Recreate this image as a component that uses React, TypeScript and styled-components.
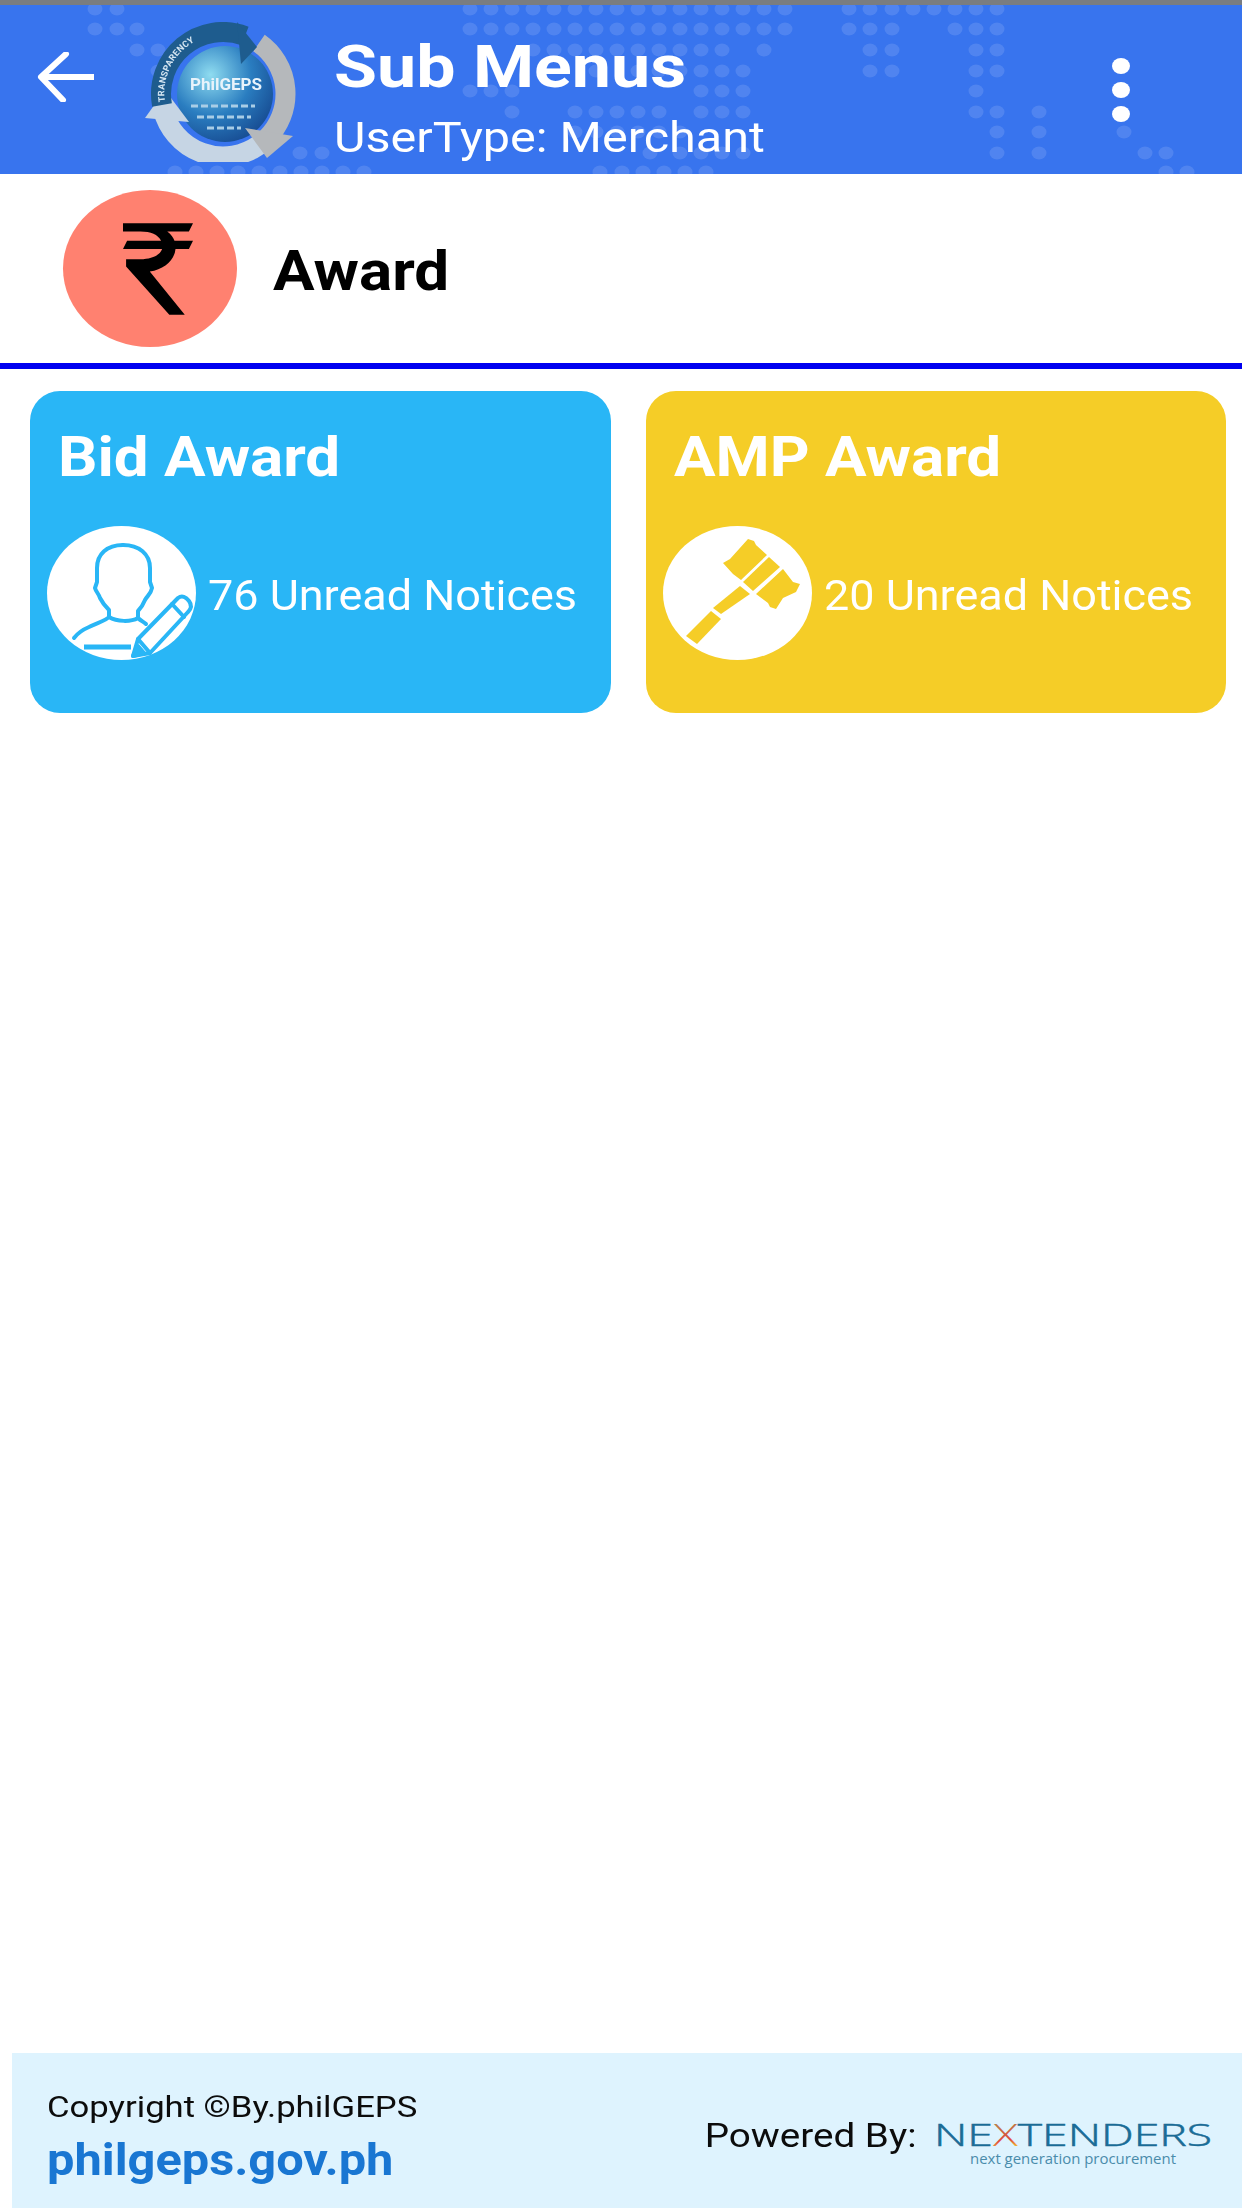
import { createGlobalStyle, styled } from 'styled-components';

const GlobalStyle = createGlobalStyle`
    * {
        box-sizing: border-box;
    }

    html, body {
        margin: 0;
        padding: 0;
        background: #ffffff;
        font-family: Roboto, "Liberation Sans", sans-serif;
    }
`

// header dots, [y, x...]
const mapDots: number[][] = [
    [9, 95, 117, 470, 491, 512, 533, 554, 575, 596, 617, 638, 659, 680, 701, 722, 743, 764, 785, 849, 870, 892, 913, 934, 955, 976, 997],
    [29, 95, 117, 137, 470, 491, 512, 533, 554, 575, 596, 617, 638, 659, 680, 701, 722, 743, 764, 785, 849, 870, 892, 955, 976, 997],
    [50, 137, 158, 533, 554, 575, 596, 617, 638, 659, 680, 701, 722, 764, 870, 892, 976, 997],
    [71, 158, 596, 638, 659, 680, 701, 722, 743, 870, 892, 976, 997],
    [91, 470, 491, 512, 701, 722, 743, 976],
    [112, 512, 575, 596, 617, 638, 659, 701, 722, 743, 976, 997, 1039],
    [132, 575, 596, 617, 638, 659, 680, 997, 1039, 1124],
    [153, 300, 322, 650, 680, 701, 722, 743, 997, 1039, 1145, 1166],
    [172, 175, 196, 217, 238, 259, 280, 301, 322, 343, 364, 600, 622, 643, 664, 685, 706, 1166, 1187],
]

const MapDots = () => (
    <DotsLayer viewBox='0 0 1242 169' aria-hidden='true'>
        {mapDots.map(([y, ...xs]) =>
            xs.map(x => (
                <ellipse key={`${x}-${y}`} cx={x} cy={y - 5} rx={7.5} ry={6.5} fill='#ffffff' opacity={0.12} />
            ))
        )}
    </DotsLayer>
)

const BackArrow = () => (
    <ArrowSvg viewBox='0 0 58 50' fill='none' stroke='#ffffff' strokeWidth={6} strokeLinecap='round' strokeLinejoin='round'>
        <path d='M57 25H4' strokeLinecap='butt' />
        <path d='M29 2 4 25l22 23' />
    </ArrowSvg>
)

const PhilgepsLogo = () => (
    <LogoSvg viewBox='0 0 151 140'>
        <defs>
            <radialGradient id='globe' cx='0.35' cy='0.3' r='0.85'>
                <stop offset='0' stopColor='#8fdcf0' />
                <stop offset='0.5' stopColor='#2a7dc0' />
                <stop offset='1' stopColor='#123f86' />
            </radialGradient>
            <path id='topArc' d='M17 80A62 62 0 0 1 100 13' />
        </defs>
        <circle cx={80} cy={72} r={48} fill='url(#globe)' />
        <path d='M46 84h64M52 95h54M62 106h34' stroke='#a9cde6' strokeWidth={3} strokeDasharray='7 3' />
        <path d='M114 123A62 62 0 0 1 18 88' fill='none' stroke='#c6d5e4' strokeWidth={20} />
        <path d='M0 96 20 68 44 100Z' fill='#c6d5e4' />
        <path d='M114 21A62 62 0 0 1 122 116' fill='none' stroke='#b5b8bb' strokeWidth={20} />
        <path d='M100 106 148 114 122 136Z' fill='#b5b8bb' />
        <path d='M17 83A62 62 0 0 1 100 14' fill='none' stroke='#1e5c8e' strokeWidth={20} />
        <path d='M92 0 112 25 96 42Z' fill='#1e5c8e' />
        <text fontFamily='Roboto, sans-serif' fontSize={9} fontWeight={700} fill='#d5e6f2' letterSpacing={0.5} dy={3}>
            <textPath href='#topArc'>TRANSPARENCY</textPath>
        </text>
        <text x={81} y={68} textAnchor='middle' fontFamily='Roboto, sans-serif' fontSize={17} fontWeight={700} fill='#e8f3fb'>PhilGEPS</text>
    </LogoSvg>
)

const RupeeIcon = () => (
    <RupeeSvg viewBox='0 0 68 89'>
        <path
            fill='#000000'
            d='M0 0H68L64 8H43C47 11 49 14 50 17H68L64 25H51C50 36 40 45 26 47L60 89H45L3 42V35H17C28 35 36 31 38 25H0L4 17H37C34 11 27 8 17 8H0Z'
        />
    </RupeeSvg>
)

const BidIcon = ({ color }: { color: string }) => (
    <AvatarSvg viewBox='0 0 149 134' fill='none' stroke={color} strokeWidth={4} strokeLinejoin='round' strokeLinecap='round'>
        <path d='M76 19C60 19 50 28 50 42V56L48 62C49 66 52 68 53 72C56 78 60 82 62 84V91C60 94 50 97 42 101 35 104 30 108 27 112' />
        <path d='M76 19C92 19 103 28 103 42V56L105 62C104 68 100 70 98 74 96 79 93 83 91 85V92C94 95 97 96 99 98' />
        <path d='M62 91C70 96 84 96 91 92' />
        <path d='M37 121H84' strokeWidth={5} strokeLinecap='butt' />
        <path d='M86 130 91 113 131 72C135 69 139 71 142 75 145 79 144 83 141 86L103 127Z' fill='#ffffff' />
        <path d='M91 113 103 127M125 78 137 91' />
        <path d='M86 130 91 120 97 127Z' fill={color} />
    </AvatarSvg>
)

const GavelIcon = ({ color }: { color: string }) => (
    <AvatarSvg viewBox='0 0 149 134' fill={color}>
        <path d='M85 13 91 15 93 19 104 29 78 54 70 48 60 37 67 33Z' />
        <path d='M106 31 117 41 90 65 80 56Z' />
        <path d='M120 43 130 56 137 58 133 66 120 72 113 83 107 81 105 77 93 68Z' />
        <path d='M77 60 87 68 58 88 50 82Z' />
        <path d='M48 85 58 93 34 118 23 110Z' />
    </AvatarSvg>
)

const NextendersLogo = () => (
    <BrandSvg viewBox='0 0 278 44'>
        <defs>
            <linearGradient id='xLeft' x1='0' y1='0' x2='1' y2='1'>
                <stop offset='0' stopColor='#8cc152' />
                <stop offset='0.45' stopColor='#e0483e' />
                <stop offset='0.55' stopColor='#f2c230' />
                <stop offset='1' stopColor='#38b6d8' />
            </linearGradient>
        </defs>
        <text
            x={0}
            y={23}
            textLength={278}
            lengthAdjust='spacingAndGlyphs'
            fontFamily='"Open Sans", sans-serif'
            fontSize={31}
            fontWeight={300}
            stroke='#1a6c96'
            strokeWidth={0.5}
            fill='#1a6c96'
        >
            NE<tspan fill='url(#xLeft)' stroke='none'>X</tspan>TENDERS
        </text>
        <text
            x={36}
            y={41}
            textLength={206}
            lengthAdjust='spacingAndGlyphs'
            fontFamily='"Open Sans", sans-serif'
            fontSize={15}
            fill='#4a8cab'
        >
            next generation procurement
        </text>
    </BrandSvg>
)

const App = () => {
    return (
        <Page>
            <GlobalStyle />
            <StatusStrip />

            <Header>
                <MapDots />
                <BackArrow />
                <PhilgepsLogo />
                <Titles>
                    <HeaderTitle>Sub Menus</HeaderTitle>
                    <HeaderSubtitle>UserType: Merchant</HeaderSubtitle>
                </Titles>
                <Kebab>
                    <KebabDot />
                    <KebabDot />
                    <KebabDot />
                </Kebab>
            </Header>

            <Section>
                <SectionBadge>
                    <RupeeIcon />
                </SectionBadge>
                <SectionTitle>Award</SectionTitle>
            </Section>

            <Cards>
                <Card $bg='#29b6f6'>
                    <CardTitle>Bid Award</CardTitle>
                    <CardRow>
                        <Avatar>
                            <BidIcon color='#29b6f6' />
                        </Avatar>
                        <CardCount>76 Unread Notices</CardCount>
                    </CardRow>
                </Card>
                <Card $bg='#f5cd27'>
                    <CardTitle>AMP Award</CardTitle>
                    <CardRow>
                        <Avatar>
                            <GavelIcon color='#f5cd27' />
                        </Avatar>
                        <CardCount>20 Unread Notices</CardCount>
                    </CardRow>
                </Card>
            </Cards>

            <Footer>
                <FooterLeft>
                    <Copyright>Copyright ©By.philGEPS</Copyright>
                    <SiteLink>philgeps.gov.ph</SiteLink>
                </FooterLeft>
                <FooterRight>
                    <PoweredBy>Powered By:</PoweredBy>
                    <NextendersLogo />
                </FooterRight>
            </Footer>
        </Page>
    );
}

export default App;

const Page = styled.div`
    display: flex;
    flex-direction: column;
    width: 1242px;
    height: 2208px;
    overflow: hidden;
    background: #ffffff;
`

const StatusStrip = styled.div`
    height: 5px;
    background: #7a7d80;
`

const Header = styled.header`
    position: relative;
    display: flex;
    flex-shrink: 0;
    height: 169px;
    padding-left: 37px;
    background: #3874ee;
    color: #ffffff;
`

const DotsLayer = styled.svg`
    position: absolute;
    top: 0;
    left: 0;
    width: 1242px;
    height: 169px;
`

const ArrowSvg = styled.svg`
    position: relative;
    flex-shrink: 0;
    width: 58px;
    height: 50px;
    margin-top: 47px;
`

const LogoSvg = styled.svg`
    position: relative;
    flex-shrink: 0;
    width: 151px;
    height: 140px;
    margin: 17px 38px 0 50px;
    filter: blur(0.7px);
`

const Titles = styled.div`
    position: relative;
    flex: 1;
    padding-top: 27px;
`

/* the screenshot is stretched sideways, so the type is too */
const HeaderTitle = styled.h1`
    margin: 0;
    font-size: 60px;
    line-height: 70px;
    font-weight: 700;
    transform: scaleX(1.165);
    transform-origin: left;
`

const HeaderSubtitle = styled.p`
    margin: 11px 0 0;
    font-size: 42px;
    line-height: 50px;
    font-weight: 400;
    transform: scaleX(1.155);
    transform-origin: left;
`

const Kebab = styled.div`
    position: relative;
    display: flex;
    flex-direction: column;
    gap: 8px;
    margin: 53px 112px 0 0;
`

const KebabDot = styled.span`
    display: block;
    width: 18px;
    height: 16px;
    border-radius: 50%;
    background: #ffffff;
`

const Section = styled.section`
    display: flex;
    align-items: center;
    flex-shrink: 0;
    gap: 36px;
    height: 195px;
    padding: 0 0 0 63px;
    border-bottom: 6px solid #0000f0;
`

const SectionBadge = styled.div`
    display: flex;
    align-items: center;
    justify-content: center;
    width: 174px;
    height: 157px;
    padding-left: 16px;
    border-radius: 50%;
    background: #ff8170;
`

const RupeeSvg = styled.svg`
    width: 70px;
    height: 92px;
`

const SectionTitle = styled.h2`
    margin: 5px 0 0;
    font-size: 56px;
    line-height: 66px;
    font-weight: 700;
    color: #000000;
    transform: scaleX(1.105);
    transform-origin: left;
`

const Cards = styled.div`
    display: grid;
    grid-template-columns: 1fr 1fr;
    gap: 35px;
    padding: 22px 16px 0 30px;
`

const Card = styled.article<{ $bg: string }>`
    height: 322px;
    padding: 33px 17px 0 17px;
    border-radius: 30px;
    background: ${props => props.$bg};
    color: #ffffff;
`

const CardTitle = styled.h3`
    margin: 0 0 0 11px;
    font-size: 56px;
    line-height: 66px;
    font-weight: 700;
    transform: scaleX(1.105);
    transform-origin: left;
`

const CardRow = styled.div`
    display: flex;
    align-items: center;
    gap: 12px;
    margin-top: 36px;
`

const Avatar = styled.div`
    flex-shrink: 0;
    width: 149px;
    height: 134px;
    border-radius: 50%;
    background: #ffffff;
`

const AvatarSvg = styled.svg`
    display: block;
    width: 100%;
    height: 100%;
`

const CardCount = styled.span`
    padding-top: 5px;
    font-size: 42px;
    line-height: 50px;
    white-space: nowrap;
    transform: scaleX(1.07);
    transform-origin: left;
`

const Footer = styled.footer`
    display: flex;
    align-items: flex-start;
    justify-content: space-between;
    margin: auto 0 0 12px;
    height: 155px;
    padding: 0 30px 0 35px;
    background: #def3fe;
`

const FooterLeft = styled.div`
    display: flex;
    flex-direction: column;
    align-items: flex-start;
    padding-top: 36px;
`

const Copyright = styled.span`
    font-size: 30px;
    line-height: 36px;
    color: #0c0c0c;
    transform: scaleX(1.155);
    transform-origin: left;
`

const SiteLink = styled.span`
    margin-top: 9px;
    font-size: 44px;
    line-height: 52px;
    font-weight: 700;
    color: #1976d2;
    transform: scaleX(1.108);
    transform-origin: left;
`

const FooterRight = styled.div`
    display: flex;
    align-items: flex-start;
    gap: 17px;
    padding-top: 65px;
`

const PoweredBy = styled.span`
    font-size: 34px;
    line-height: 34px;
    color: #0c0c0c;
    transform: scaleX(1.136);
    transform-origin: right;
`

const BrandSvg = styled.svg`
    display: block;
    width: 278px;
    height: 44px;
    margin-top: 5px;
    overflow: visible;
`
